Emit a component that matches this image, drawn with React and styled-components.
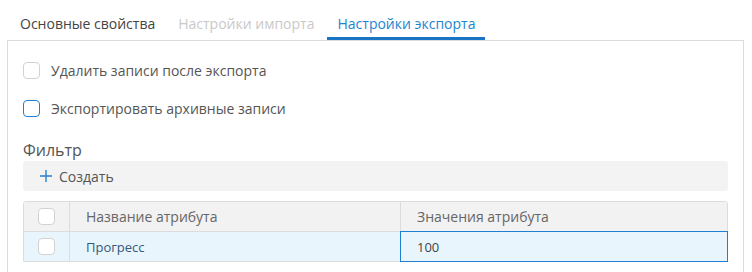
import styled, { createGlobalStyle } from "styled-components";

/* Styling */
const Global = createGlobalStyle`
  html, body {
    margin: 0;
    padding: 0;
    background: #fff;
    overflow: hidden;
    font-family: "Open Sans", "Noto Sans", sans-serif;
  }
`;

const Page = styled.div`
  width: 752px;
  height: 272px;
  overflow: hidden;
`;

const Tabs = styled.div`
  display: flex;
  gap: 3px;
  padding-left: 10px;
  height: 40px;
`;

const Tab = styled.div`
  box-sizing: border-box;
  height: 40px;
  padding: 14px 10px 0;
  font-size: 14px;
  line-height: 19px;
  white-space: nowrap;
  color: ${(p) => (p.$active ? "#1c85d0" : p.$disabled ? "#c9c9c9" : "#444")};
  border-bottom: 3px solid ${(p) => (p.$active ? "#1a74c4" : "transparent")};
`;

const Panel = styled.div`
  margin: 0 8px 0 7px;
  border: 1px solid #dcdcdc;
  padding: 20px 15px 30px;
  display: flex;
  flex-direction: column;
`;

const CheckRow = styled.label`
  display: flex;
  align-items: center;
  gap: 11px;
  height: 18px;
  margin-bottom: ${(p) => p.$mb || 0}px;
  font-size: 14px;
  color: #555;
`;

const Box = styled.span`
  box-sizing: border-box;
  width: 17px;
  height: 17px;
  flex: none;
  background: #fff;
  border-radius: 4px;
  border: ${(p) => (p.$focus ? "1.5px solid #1f80d2" : "1px solid #d2d2d2")};
`;

const Heading = styled.div`
  margin-top: 22px;
  font-size: 16px;
  line-height: 22px;
  color: #555;
`;

const Toolbar = styled.div`
  height: 30px;
  background: #f3f3f3;
  border-radius: 3px;
  display: flex;
  align-items: center;
  padding-left: 16px;
  gap: 6px;
  font-size: 14px;
  color: #555;
`;

const Table = styled.div`
  margin-top: 10px;
  border: 1px solid #dcdcdc;
  border-radius: 3px 3px 0 0;
`;

const Row = styled.div`
  display: grid;
  grid-template-columns: 45px 331px 1fr;
  height: 29px;
  background: ${(p) => (p.$header ? "#f2f2f2" : "#e8f5fd")};
  border-radius: ${(p) => (p.$header ? "3px 3px 0 0" : "0")};
  border-top: ${(p) => (p.$header ? "none" : "1px solid #dcdcdc")};
`;

const Cell = styled.div`
  position: relative;
  box-sizing: border-box;
  display: flex;
  align-items: center;
  justify-content: ${(p) => (p.$center ? "center" : "flex-start")};
  padding-left: ${(p) => (p.$center ? 0 : 16)}px;
  border-left: ${(p) => (p.$first ? "none" : "1px solid #dcdcdc")};
  font-size: ${(p) => (p.$header ? 14 : 13)}px;
  color: ${(p) => (p.$header ? "#666" : p.$link ? "#35597a" : "#444")};
  white-space: nowrap;
  ${(p) =>
    p.$active &&
    `
    &::after {
      content: "";
      position: absolute;
      top: -1px;
      left: -1px;
      right: -1px;
      bottom: -1px;
      border: 1px solid #1f80d2;
      pointer-events: none;
    }
  `}
`;
/* Styling End */

const Plus = () => (
  <svg width="14" height="14" viewBox="0 0 14 14">
    <path d="M7 1v12M1 7h12" stroke="#2a80d0" strokeWidth="1.4" fill="none" />
  </svg>
);

const App = () => {
  return (
    <Page>
      <Global />
      <Tabs>
        <Tab>Основные свойства</Tab>
        <Tab $disabled>Настройки импорта</Tab>
        <Tab $active>Настройки экспорта</Tab>
      </Tabs>
      <Panel>
        <CheckRow $mb={20}>
          <Box />
          Удалить записи после экспорта
        </CheckRow>
        <CheckRow>
          <Box $focus />
          Экспортировать архивные записи
        </CheckRow>
        <Heading>Фильтр</Heading>
        <Toolbar>
          <Plus />
          Создать
        </Toolbar>
        <Table>
          <Row $header>
            <Cell $first $center>
              <Box />
            </Cell>
            <Cell $header>Название атрибута</Cell>
            <Cell $header>Значения атрибута</Cell>
          </Row>
          <Row>
            <Cell $first $center>
              <Box />
            </Cell>
            <Cell $link>Прогресс</Cell>
            <Cell $active>100</Cell>
          </Row>
        </Table>
      </Panel>
    </Page>
  );
};

export default App;
